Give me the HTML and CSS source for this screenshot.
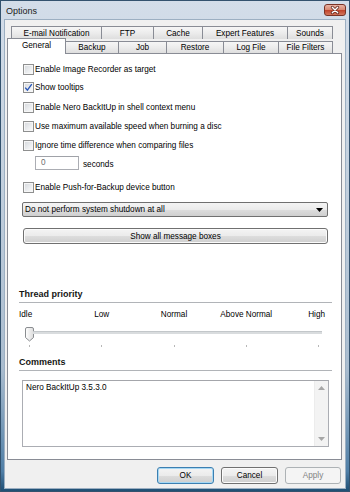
FILE: index.html
```html
<!DOCTYPE html>
<html>

<head>
    <title>Options</title>
    <link rel="stylesheet" href="styles.css">
</head>

<body>
    <div class="window">
        <div class="titlebar">
            <span class="title">Options</span>
            <span class="close">
                <svg width="22" height="12" viewBox="0 0 22 12">
                    <path d="M8 3 L14 9 M14 3 L8 9" stroke="#5a1d14" stroke-width="3.2" stroke-linecap="round"/>
                    <path d="M8 3 L14 9 M14 3 L8 9" stroke="#ffffff" stroke-width="1.6" stroke-linecap="round"/>
                </svg>
            </span>
        </div>
        <div class="client">
            <div class="tabs">
                <div class="tabrow back">
                    <span class="tab w-email">E-mail Notification</span>
                    <span class="tab w-ftp">FTP</span>
                    <span class="tab w-cache">Cache</span>
                    <span class="tab w-expert">Expert Features</span>
                    <span class="tab w-sounds">Sounds</span>
                </div>
                <div class="tabrow front">
                    <span class="tab active w-general">General</span>
                    <span class="tab w-backup">Backup</span>
                    <span class="tab w-job">Job</span>
                    <span class="tab w-restore">Restore</span>
                    <span class="tab w-log">Log File</span>
                    <span class="tab w-filters">File Filters</span>
                </div>
            </div>

            <div class="panel">
                <div class="check-row first">
                    <span class="checkbox"></span>
                    <span>Enable Image Recorder as target</span>
                </div>
                <div class="check-row">
                    <span class="checkbox">
                        <svg width="9" height="9" viewBox="0 0 9 9">
                            <path d="M1.2 4.6 L3.4 7.2 L7.8 1.2" fill="none" stroke="#2a57b8" stroke-width="1.4"/>
                        </svg>
                    </span>
                    <span>Show tooltips</span>
                </div>
                <div class="check-row gap2">
                    <span class="checkbox"></span>
                    <span>Enable Nero BackItUp in shell context menu</span>
                </div>
                <div class="check-row gap1">
                    <span class="checkbox"></span>
                    <span>Use maximum available speed when burning a disc</span>
                </div>
                <div class="check-row gap1">
                    <span class="checkbox"></span>
                    <span>Ignore time difference when comparing files</span>
                </div>
                <div class="spin-row">
                    <span class="spinbox">0</span>
                    <span class="unit">seconds</span>
                </div>
                <div class="check-row push">
                    <span class="checkbox"></span>
                    <span>Enable Push-for-Backup device button</span>
                </div>
                <div class="select">
                    <span>Do not perform system shutdown at all</span>
                    <svg width="7" height="4" viewBox="0 0 7 4"><path d="M0 0 H7 L3.5 4 Z" fill="#000"/></svg>
                </div>
                <div class="btn wide">Show all message boxes</div>

                <div class="group-title priority">Thread priority</div>
                <div class="scale">
                    <span class="mark first"><span>Idle</span></span>
                    <span class="mark"><span>Low</span></span>
                    <span class="mark"><span>Normal</span></span>
                    <span class="mark"><span>Above Normal</span></span>
                    <span class="mark last"><span>High</span></span>
                </div>
                <div class="slider">
                    <svg class="thumb" width="9" height="15" viewBox="0 0 9 15">
                        <defs>
                            <linearGradient id="tg" x1="0" y1="0" x2="1" y2="0">
                                <stop offset="0" stop-color="#ffffff"/>
                                <stop offset="1" stop-color="#dcdcdc"/>
                            </linearGradient>
                        </defs>
                        <path d="M2 0.5 H7 Q8.5 0.5 8.5 2 V10.5 L4.5 14 L0.5 10.5 V2 Q0.5 0.5 2 0.5 Z" fill="url(#tg)" stroke="#8a8d90"/>
                    </svg>
                    <span class="track"></span>
                </div>
                <div class="ticks">
                    <i></i><i></i><i></i><i></i><i></i>
                </div>

                <div class="group-title comments">Comments</div>
                <div class="memo">
                    <div class="memo-text">Nero BackItUp 3.5.3.0</div>
                    <div class="scrollbar">
                        <svg width="7" height="4" viewBox="0 0 7 4"><path d="M3.5 0 L7 4 H0 Z" fill="#a6a6a6"/></svg>
                        <svg width="7" height="4" viewBox="0 0 7 4"><path d="M0 0 H7 L3.5 4 Z" fill="#a6a6a6"/></svg>
                    </div>
                </div>
            </div>

            <div class="buttons">
                <div class="btn default">OK</div>
                <div class="btn">Cancel</div>
                <div class="btn disabled">Apply</div>
            </div>
        </div>
    </div>
</body>

</html>
```

FILE: styles.css
```css
* {
    margin: 0;
    padding: 0;
    box-sizing: border-box;
}

body {
    width: 350px;
    height: 492px;
    overflow: hidden;
    font-family: "Liberation Sans", Arial, sans-serif;
    font-size: 8.2px;
    color: #000;
}

.window {
    width: 350px;
    height: 492px;
    border: 1px solid #33526e;
    background: linear-gradient(180deg, #d3dde9 0%, #c3d0de 35%, #a9bccf 75%, #4f7ea6 96%, #1f4f74 100%);
    display: flex;
    flex-direction: column;
}

/* title bar */
.titlebar {
    height: 19px;
    display: flex;
    justify-content: space-between;
    align-items: center;
    padding: 0 3px 0 5px;
}

.title {
    font-size: 9px;
    color: #1a1a1a;
}

.close {
    width: 22px;
    height: 12px;
    align-self: flex-start;
    margin-top: 3px;
    border: 1px solid #7a3326;
    border-radius: 3px;
    background: linear-gradient(180deg, #e9b3a4 0%, #d98a74 45%, #c2452c 55%, #d2765c 100%);
    display: flex;
    align-items: center;
    justify-content: center;
}

.close svg {
    display: block;
}

/* client area */
.client {
    flex: 1;
    margin: 0 4px 3px 4px;
    background: #f0f0f0;
    box-shadow: 0 0 0 1px #9cafc2;
    padding-top: 6px;
    display: flex;
    flex-direction: column;
}

/* tabs */
.tabs {
    margin-left: 2px;
}

.tabrow {
    display: flex;
}

.tabrow.back {
    height: 13px;
    padding-left: 4px;
}

.tabrow.front {
    height: 14px;
}

.tab {
    display: flex;
    align-items: center;
    justify-content: center;
    border: 1px solid #898c95;
    border-bottom: none;
    background: linear-gradient(180deg, #f6f6f6 0%, #ececec 50%, #dedede 100%);
    white-space: nowrap;
}

.tab + .tab {
    margin-left: -1px;
}

.back .tab {
    height: 13px;
}

.front .tab {
    height: 12px;
    margin-top: 2px;
}

.front .tab.active {
    height: 16px;
    margin-top: -1px;
    background: #fff;
    position: relative;
    z-index: 2;
    padding-bottom: 2px;
}

.w-email { width: 91px; }
.w-ftp { width: 53px; }
.w-cache { width: 50px; }
.w-expert { width: 86px; }
.w-sounds { width: 46px; }
.w-general { width: 59px; }
.w-backup { width: 54px; }
.w-job { width: 49px; }
.w-restore { width: 58px; }
.w-log { width: 56px; }
.w-filters { width: 55px; }

/* tab page */
.panel {
    margin-left: 2px;
    width: 335px;
    height: 407px;
    border: 1px solid #898c95;
    background: #fff;
    display: flex;
    flex-direction: column;
}

.check-row {
    height: 18px;
    display: flex;
    align-items: center;
    padding-left: 15px;
    white-space: nowrap;
}

.check-row.first { margin-top: 6px; }
.check-row.gap1 { margin-top: 1px; }
.check-row.gap2 { margin-top: 2px; }
.check-row.push { margin-top: 8px; }

.checkbox {
    width: 11px;
    height: 11px;
    margin-right: 1px;
    border: 1px solid #8e8f8f;
    background: linear-gradient(135deg, #d4d7db 0%, #eceef0 60%, #fbfbfb 100%);
    box-shadow: inset 0 0 0 1px #f6f6f6;
    display: flex;
    align-items: center;
    justify-content: center;
}

.checkbox svg {
    display: block;
}

.spin-row {
    height: 14px;
    margin-top: 2px;
    padding-left: 27px;
    display: flex;
    align-items: center;
}

.spinbox {
    width: 44px;
    height: 14px;
    border: 1px solid #abadb3;
    border-top-color: #a0a2a8;
    background: #fff;
    color: #6d6d6d;
    padding-left: 5px;
    line-height: 12px;
}

.unit {
    margin-left: 4px;
    margin-top: 3px;
}

.select {
    margin: 6px 0 0 14px;
    width: 306px;
    height: 15px;
    border: 1px solid #707070;
    border-radius: 2px;
    background: linear-gradient(180deg, #f4f4f4 0%, #ebebeb 50%, #dddddd 51%, #cfcfcf 100%);
    display: flex;
    align-items: center;
    justify-content: space-between;
    padding: 0 4px 0 2px;
}

.btn {
    height: 17px;
    border: 1px solid #707070;
    border-radius: 3px;
    background: linear-gradient(180deg, #f4f4f4 0%, #ebebeb 50%, #dddddd 51%, #cfcfcf 100%);
    box-shadow: inset 0 0 0 1px #fbfbfb;
    display: flex;
    align-items: center;
    justify-content: center;
}

.btn.wide {
    margin: 11px 0 0 15px;
    width: 305px;
    height: 16px;
}

/* group headers */
.group-title {
    margin: 0 9px 0 11px;
    height: 16px;
    border-bottom: 1px solid #b1b4b8;
    font-size: 9px;
    font-weight: bold;
    line-height: 14px;
    color: #151515;
}

.group-title.priority { margin-top: 43px; }
.group-title.comments { margin-top: 8px; }

/* trackbar */
.scale {
    margin: 4px 0 0 21px;
    width: 290px;
    height: 14px;
    display: flex;
    justify-content: space-between;
    align-items: center;
}

.mark {
    width: 1px;
    display: flex;
    justify-content: center;
    white-space: nowrap;
}

.mark.first {
    justify-content: flex-start;
}

.mark.first span {
    margin-left: -10px;
}

.mark.last {
    justify-content: flex-end;
}

.mark.last span {
    margin-right: -6px;
}

.slider {
    margin: 6px 0 0 17px;
    width: 297px;
    height: 15px;
    display: flex;
    align-items: center;
}

.thumb {
    display: block;
    flex: none;
}

.track {
    flex: 1;
    height: 3px;
    margin-left: -1px;
    margin-top: -5px;
    background: #d9dcde;
    border-top: 1px solid #c3c7ca;
}

.ticks {
    margin: 3px 0 0 21px;
    width: 290px;
    height: 2px;
    display: flex;
    justify-content: space-between;
}

.ticks i {
    width: 1px;
    height: 2px;
    background: #b7b7b7;
}

/* comments box */
.memo {
    margin: 9px 0 0 14px;
    width: 307px;
    height: 67px;
    border: 1px solid #abadb3;
    border-top-color: #a4a6ab;
    background: #fff;
    display: flex;
}

.memo-text {
    flex: 1;
    padding: 2px 3px;
    line-height: 9px;
}

.scrollbar {
    width: 14px;
    background: #f3f3f3;
    border-left: 1px solid #ececec;
    display: flex;
    flex-direction: column;
    justify-content: space-between;
    align-items: center;
    padding: 5px 0 5px;
}

.scrollbar svg {
    display: block;
}

/* dialog buttons */
.buttons {
    margin-top: 7px;
    padding-right: 4px;
    display: flex;
    justify-content: flex-end;
    gap: 7px;
}

.buttons .btn {
    width: 57px;
}

.buttons .btn.disabled {
    width: 56px;
    border-color: #adb2b5;
    background: #f4f4f4;
    box-shadow: none;
    color: #838383;
}

.btn.default {
    border-color: #3c7fb1;
    box-shadow: inset 0 0 0 1px #a6d8f4;
}
```
